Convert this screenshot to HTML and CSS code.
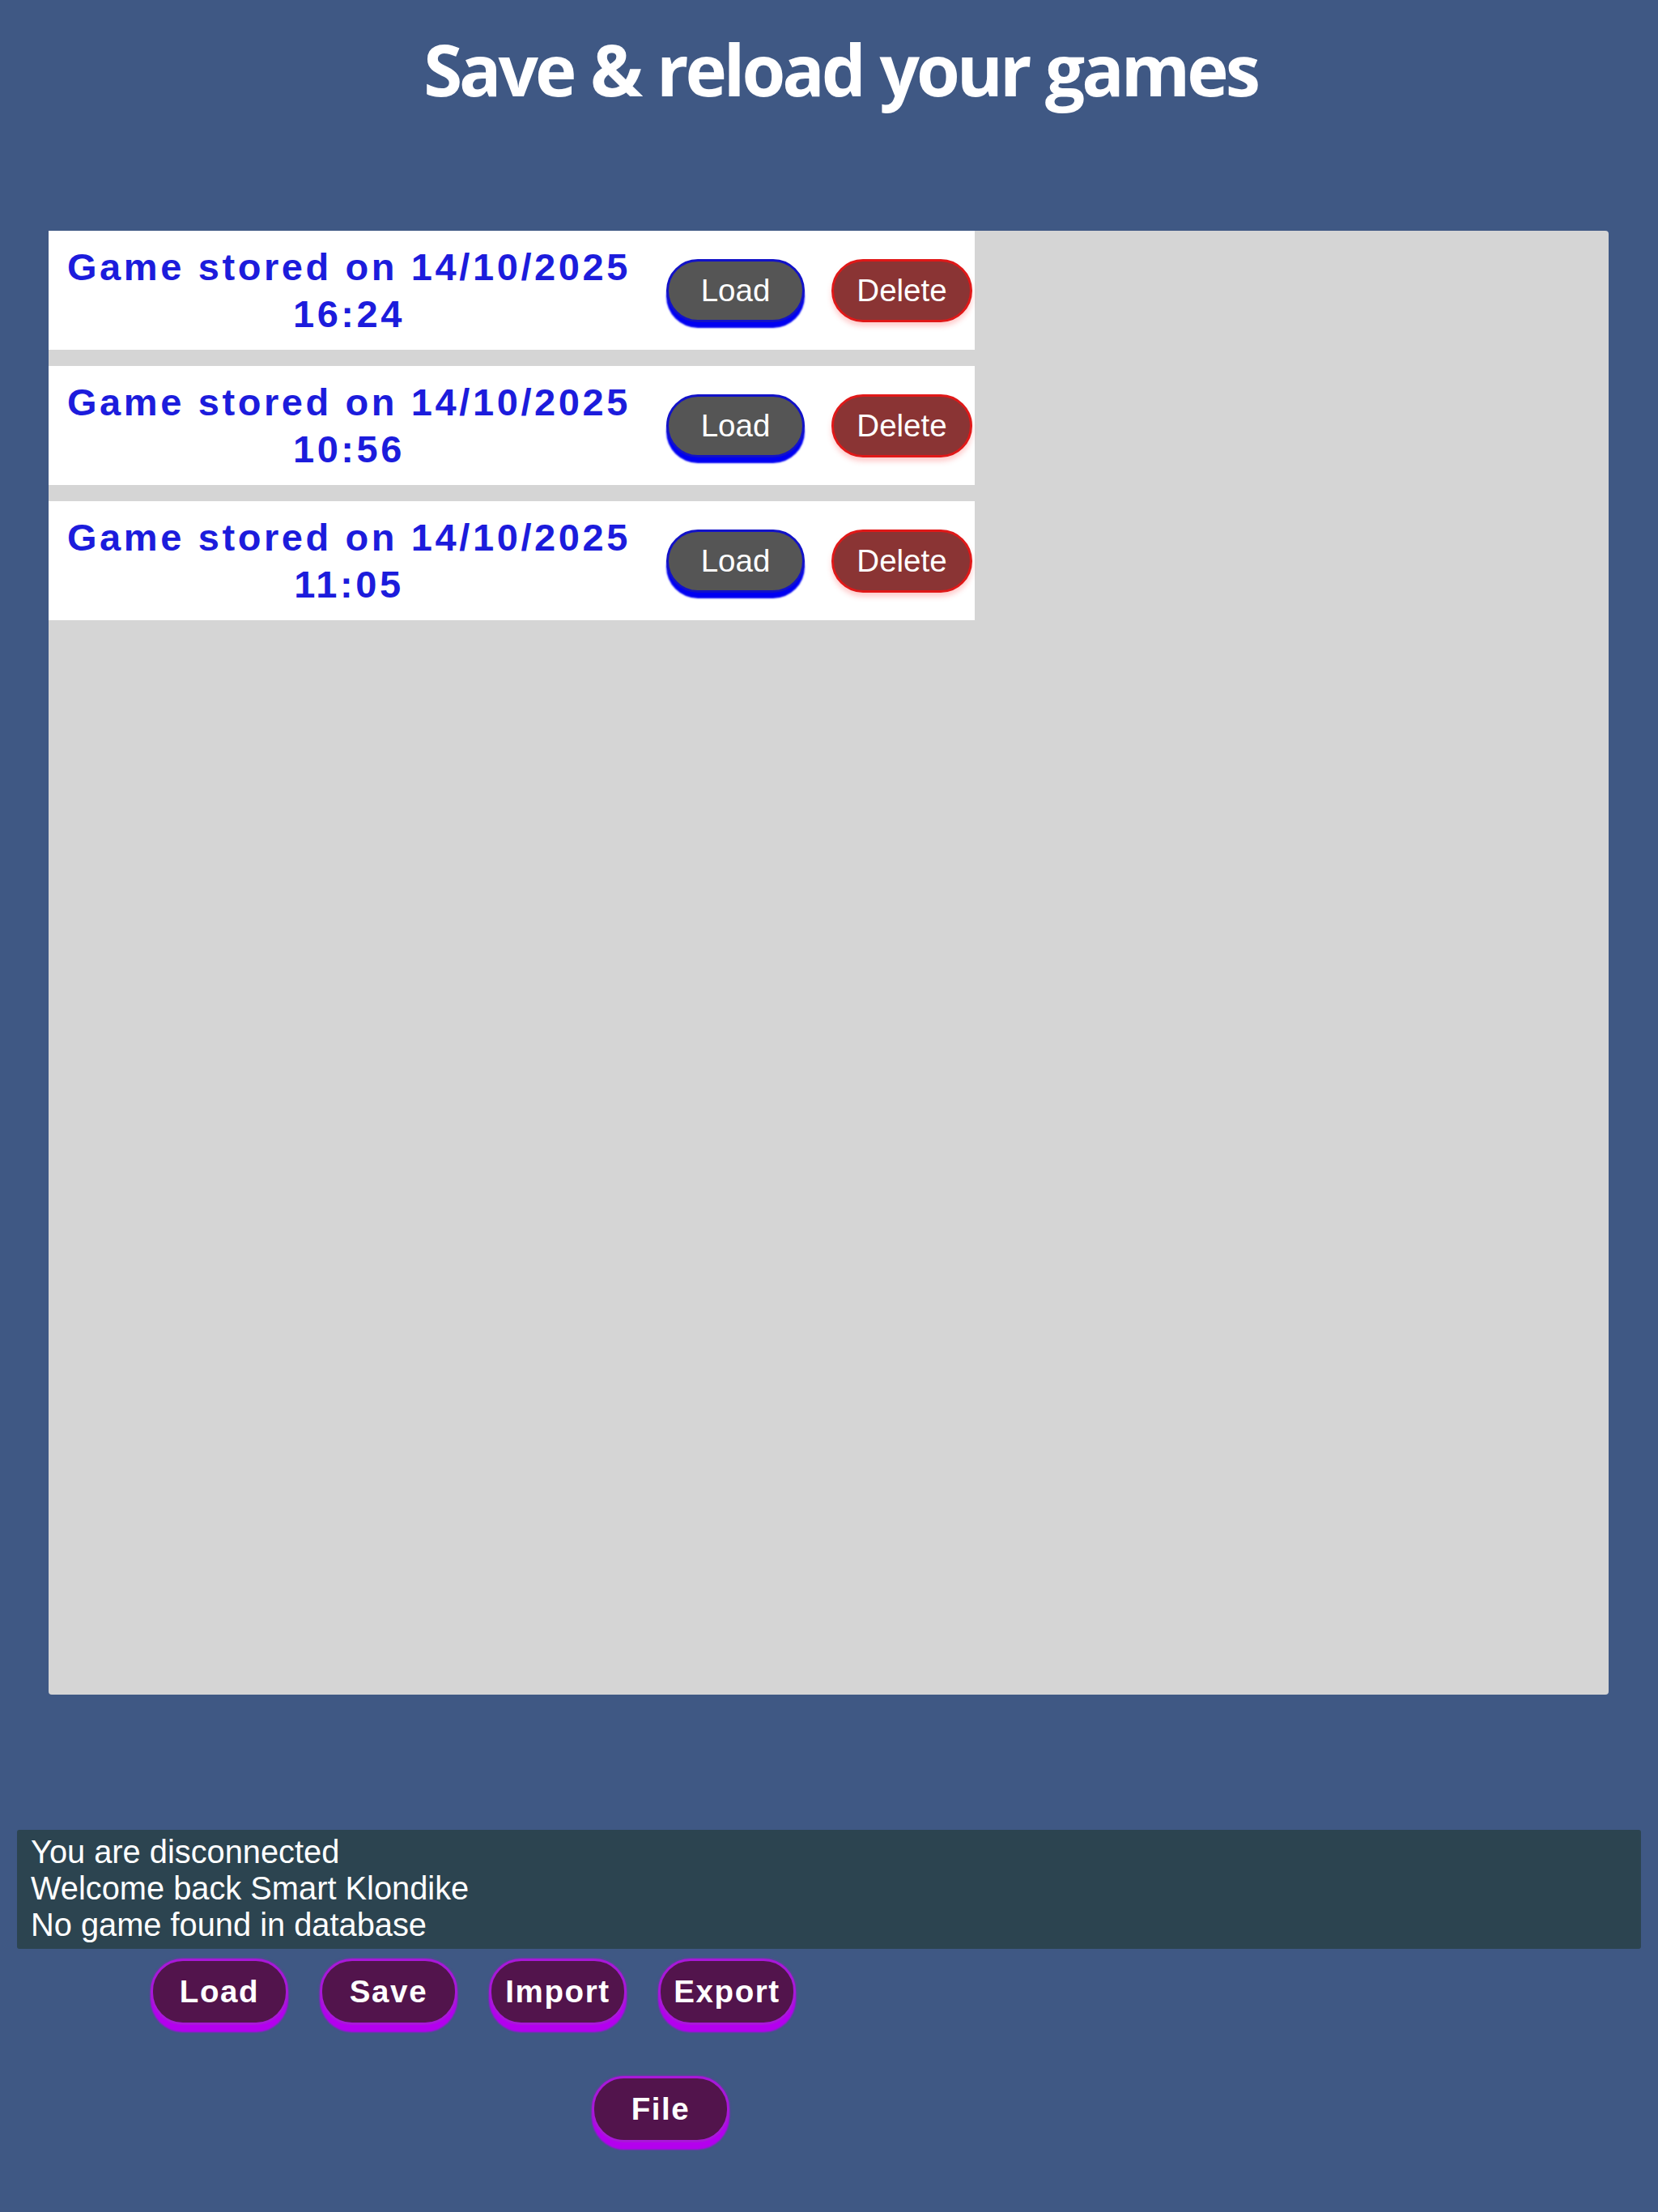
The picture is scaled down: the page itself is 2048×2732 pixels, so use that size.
FILE: index.html
```html
<!DOCTYPE html>
<html lang="en">
<head>
<meta charset="utf-8">
<title>Save &amp; reload your games</title>
<link rel="stylesheet" href="styles.css">
</head>
<body>
<div class="page">
  <h1 class="title">Save &amp; reload your games</h1>
  <div class="panel">
    <div class="game-row">
      <div class="game-label">Game stored on 14/10/2025<br>16:24</div>
      <button class="btn-load">Load</button>
      <button class="btn-delete">Delete</button>
    </div>
    <div class="game-row">
      <div class="game-label">Game stored on 14/10/2025<br>10:56</div>
      <button class="btn-load">Load</button>
      <button class="btn-delete">Delete</button>
    </div>
    <div class="game-row">
      <div class="game-label">Game stored on 14/10/2025<br>11:05</div>
      <button class="btn-load">Load</button>
      <button class="btn-delete">Delete</button>
    </div>
  </div>
  <div class="messages">
    <div>You are disconnected</div>
    <div>Welcome back Smart Klondike</div>
    <div>No game found in database</div>
  </div>
  <div class="actions">
    <button class="btn-action">Load</button>
    <button class="btn-action">Save</button>
    <button class="btn-action">Import</button>
    <button class="btn-action">Export</button>
  </div>
  <div class="actions-file">
    <button class="btn-action">File</button>
  </div>
</div>
</body>
</html>
```
FILE: styles.css
```css
html, body {
  margin: 0;
  padding: 0;
}
body {
  background: #3f5884;
  width: 2048px;
  min-height: 2732px;
  font-family: "Liberation Sans", Arial, sans-serif;
}
.page {
  display: flex;
  flex-direction: column;
}
.title {
  margin: 0;
  padding: 25px 0 0 28px;
  height: 120px;
  line-height: 120px;
  text-align: center;
  color: #ffffff;
  font-family: "Open Sans", sans-serif;
  font-weight: 700;
  font-size: 87px;
  letter-spacing: -4px;
  word-spacing: 2px;
}
.panel {
  margin: 140px 0 0 60px;
  width: 1927px;
  height: 1808px;
  background: #d5d5d5;
  border-radius: 4px;
  display: flex;
  flex-direction: column;
  align-items: flex-start;
  gap: 20px;
}
.game-row {
  width: 1144px;
  height: 147px;
  background: #ffffff;
  display: flex;
  align-items: center;
}
.game-label {
  width: 742px;
  text-align: center;
  color: #1c1cdc;
  font-weight: 700;
  font-size: 47px;
  line-height: 58px;
  letter-spacing: 3.6px;
}
button {
  font-family: "Liberation Sans", Arial, sans-serif;
  cursor: pointer;
}
.btn-load, .btn-delete {
  box-sizing: border-box;
  height: 78px;
  border-radius: 40px;
  font-size: 38.5px;
  color: #ffffff;
  padding: 0;
  text-align: center;
}
.btn-load {
  width: 171px;
  margin-left: 21px;
  background: #555555;
  border: 3px solid #1212c8;
  box-shadow: 0 7px 2px #0000f2;
}
.btn-delete {
  width: 174px;
  margin-left: 33px;
  background: #8a3434;
  border: 3px solid #e01818;
  box-shadow: 0 5px 6px rgba(255, 90, 90, 0.3);
}
.messages {
  margin: 167px 0 0 21px;
  width: 2006px;
  box-sizing: border-box;
  height: 147px;
  padding: 5px 17px 7px;
  background: #2c4450;
  border-radius: 3px;
  color: #ffffff;
  font-size: 39.8px;
  line-height: 45px;
}
.actions {
  display: flex;
  gap: 39px;
  margin: 12px 0 0 186px;
}
.actions-file {
  display: flex;
  margin: 63px 0 0 731px;
}
.btn-action {
  box-sizing: border-box;
  width: 170px;
  height: 82px;
  padding: 0;
  border-radius: 40px;
  background: #52144c;
  border: 3px solid #a818d8;
  box-shadow: 0 9px 2px #b400ee, 0 0 3px rgba(190, 0, 240, 0.6);
  color: #ffffff;
  font-size: 38.5px;
  font-weight: 700;
  letter-spacing: 1.6px;
}
```
